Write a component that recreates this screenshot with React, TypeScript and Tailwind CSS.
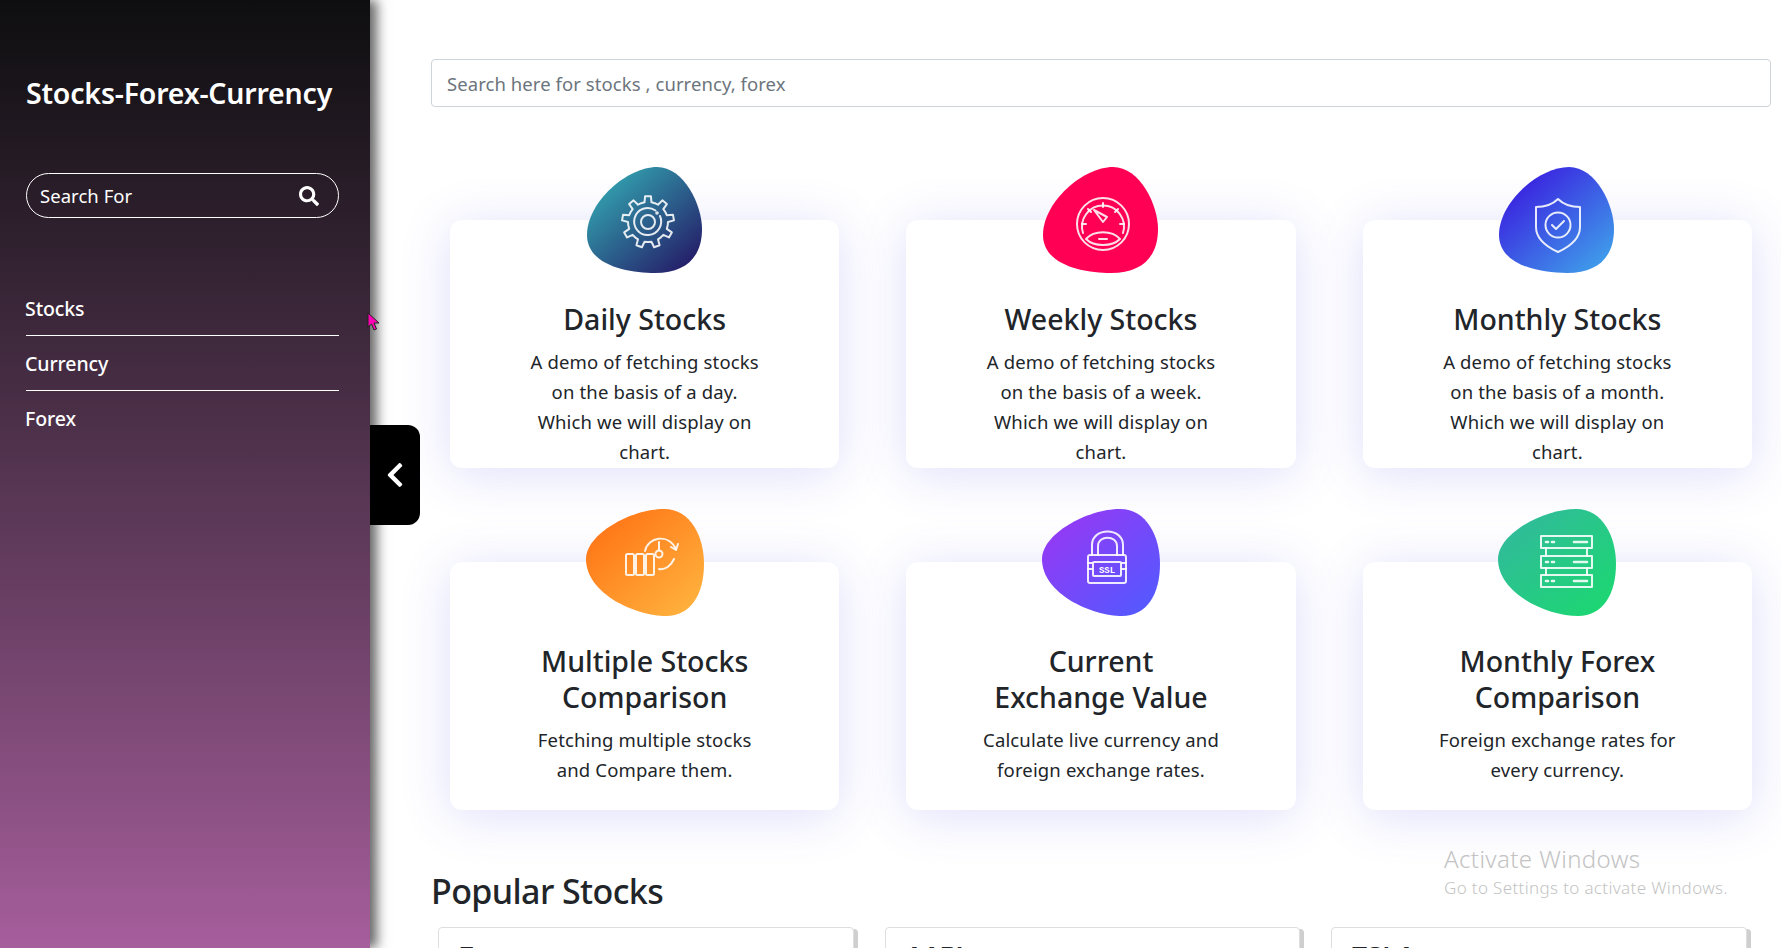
import React from "react";
import { FaSearch, FaChevronLeft } from "react-icons/fa";

const blobA = "M71 0C98 0 116 38 116 62C116 90 100 106 69 106C41 106 1 98 1 68C1 35 41 0 71 0Z";
const blobB = "M78 0C105 0 118 28 118 55C118 85 105 107 80 107C50 107 0 85 0 50C0 25 45 0 78 0Z";

function gearPath(cx: number, cy: number, ro: number, ri: number, teeth: number) {
  const pts: string[] = [];
  const step = (Math.PI * 2) / teeth;
  for (let i = 0; i < teeth; i++) {
    const a = i * step - Math.PI / 2;
    const o = [a - step * 0.25, a - step * 0.16, a + step * 0.16, a + step * 0.25, a + step * 0.5];
    const r = [ri, ro, ro, ri, ri];
    o.forEach((t, j) => pts.push(`${(cx + r[j] * Math.cos(t)).toFixed(2)} ${(cy + r[j] * Math.sin(t)).toFixed(2)}`));
  }
  return "M" + pts.join("L") + "Z";
}

const stroke = { fill: "none", stroke: "white", strokeWidth: 2, strokeLinecap: "round", strokeLinejoin: "round", strokeOpacity: 0.88 } as const;

const GearIcon = () => (
  <g {...stroke}>
    <path d={gearPath(62, 55, 26, 20, 9)} />
    <path d="M69.5 43.5A13.5 13.5 0 1 0 74 49" />
    <circle cx="62" cy="55" r="7" />
    <circle cx="71" cy="46" r="0.8" />
  </g>
);
const GaugeIcon = () => (
  <g {...stroke}>
    <circle cx="61" cy="57" r="26" />
    <path d="M41 66A21 21 0 1 1 81 66" />
    <path d="M44 72C52 63 70 63 78 72C70 80 52 80 44 72Z" />
    <path d="M57 72H65" />
    <path d="M52 43L65 50L61 55Z" />
    <path d="M61 36V40M46 42L49 45M76 42L73 45M40 57H44M82 57H78" />
  </g>
);
const ShieldIcon = () => (
  <g {...stroke}>
    <path d="M60 32C65 37 72 40 82 40V60C82 72 71 80 60 85C49 80 38 72 38 60V40C48 40 55 37 60 32Z" />
    <circle cx="60" cy="58" r="12.5" />
    <path d="M54 58L58 62L66 54" />
  </g>
);
const MultiIcon = () => (
  <g {...stroke}>
    <rect x="40" y="45" width="8" height="21" rx="1.5" />
    <rect x="50" y="45" width="8" height="21" rx="1.5" />
    <rect x="60" y="45" width="8" height="21" rx="1.5" />
    <circle cx="73" cy="45" r="3.5" />
    <path d="M73 41.500V33M59 42C62 28 82 24 90 40" />
    <path d="M85 38L90 41L92 35" />
    <path d="M88 50C85 57 79 61 73 60" />
  </g>
);
const LockIcon = () => (
  <g {...stroke}>
    <path d="M50 46V36C50 18 81 18 81 36V46" />
    <path d="M56 46V37C56 26 75 26 75 37V46" />
    <rect x="46" y="46" width="38" height="28" rx="2" />
    <rect x="51" y="53" width="28" height="14" rx="1" />
    <path d="M46 54H50M46 60H50M80 54H84M80 60H84" />
    <text x="65" y="63.500" textAnchor="middle" fontSize="9" fill="white" stroke="none" fontFamily="'Liberation Mono', monospace" fontWeight="700">SSL</text>
  </g>
);
const ServerIcon = () => (
  <g {...stroke}>
    <rect x="43" y="27" width="51" height="12" />
    <rect x="43" y="47" width="51" height="12" />
    <rect x="43" y="66" width="51" height="12" />
    <path d="M48 39V47M89 39V47M48 59V66M89 59V66" />
    <path d="M48 33H50M54 33H56M76 33H89M48 53H50M54 53H56M76 53H89M48 72H50M54 72H56M76 72H89" strokeWidth={2.6} />
  </g>
);

const services = [
  { title: ["Daily Stocks"], lines: ["A demo of fetching stocks", "on the basis of a day.", "Which we will display on", "chart."], blob: blobA, from: "#3199aa", to: "#25206a", icon: <GearIcon /> },
  { title: ["Weekly Stocks"], lines: ["A demo of fetching stocks", "on the basis of a week.", "Which we will display on", "chart."], blob: blobA, from: "#ff0054", to: "#ff0054", icon: <GaugeIcon /> },
  { title: ["Monthly Stocks"], lines: ["A demo of fetching stocks", "on the basis of a month.", "Which we will display on", "chart."], blob: blobA, from: "#3a27e0", to: "#3f9bea", icon: <ShieldIcon /> },
  { title: ["Multiple Stocks", "Comparison"], lines: ["Fetching multiple stocks", "and Compare them."], blob: blobB, from: "#ff7a1a", to: "#ffb03c", icon: <MultiIcon /> },
  { title: ["Current", "Exchange Value"], lines: ["Calculate live currency and", "foreign exchange rates."], blob: blobB, from: "#8f3cf5", to: "#5658ff", icon: <LockIcon /> },
  { title: ["Monthly Forex", "Comparison"], lines: ["Foreign exchange rates for", "every currency."], blob: blobB, from: "#2fbd97", to: "#1dd673", icon: <ServerIcon /> },
];

function ServiceCard({ s, i }: { s: (typeof services)[number]; i: number }) {
  return (
    <div className="h-[248px] bg-white rounded-xl shadow-[0_6px_50px_rgba(90,90,235,0.2)] text-center">
      <svg width="118" height="107" viewBox="0 0 118 107" className="mx-auto -mt-[53px]">
        <defs>
          <linearGradient id={`g${i}`} x1="0.12" y1="0.1" x2="0.9" y2="0.9">
            <stop offset="0.1" stopColor={s.from} />
            <stop offset="1" stopColor={s.to} />
          </linearGradient>
        </defs>
        <path d={s.blob} fill={`url(#g${i})`} />
        {s.icon}
      </svg>
      <h3 className="mt-[27px] text-[28.500px] leading-9 font-medium text-[#212529]">
        {s.title.map((t) => (
          <span key={t} className="block">{t}</span>
        ))}
      </h3>
      <p className="mt-[10px] text-[18.500px] leading-[30px] text-[#212529] tracking-[0.15px]">
        {s.lines.map((t) => (
          <span key={t} className="block">{t}</span>
        ))}
      </p>
    </div>
  );
}

const stockNames = ["Forex", "AAPL", "TSLA"];

export default function App() {
  return (
    <div className="relative flex h-screen w-full overflow-hidden bg-white font-['Noto_Sans','Open_Sans',sans-serif]">
      <aside className="relative z-10 flex w-[370px] shrink-0 flex-col bg-gradient-to-b from-[#0e0e10] to-[#a65e9c] pl-[26px] pr-[31px] pt-[71px] text-white shadow-[7px_0_11px_rgba(40,40,40,0.7)]">
        <h1 className="text-[28.500px] leading-[44px] font-semibold tracking-[-0.2px] whitespace-nowrap">Stocks-Forex-Currency</h1>
        <div className="mt-[58px] flex h-[45px] items-center justify-between rounded-full border border-white pl-[13px] pr-[19px]">
          <span className="text-[18.500px] tracking-[0.05px]">Search For</span>
          <FaSearch size={20} />
        </div>
        <nav className="mt-[63px] text-[19.500px] font-medium tracking-[-0.1px]">
          <a className="block h-[55px] border-b border-white leading-[55px]"><span className="-ml-px">Stocks</span></a>
          <a className="block h-[55px] border-b border-white leading-[55px]"><span className="-ml-px">Currency</span></a>
          <a className="block h-[55px] leading-[55px]"><span className="-ml-px">Forex</span></a>
        </nav>
        <button className="absolute left-full top-[425px] flex h-[100px] w-[50px] items-center justify-center rounded-r-xl bg-black text-white">
          <FaChevronLeft size={28} />
        </button>
      </aside>

      <main className="flex-1 min-w-0 pl-[61px] pr-[10px] pt-[59px]">
        <input
          readOnly
          placeholder="Search here for stocks , currency, forex"
          className="h-[48px] w-full rounded border border-[#ced4da] px-[15px] text-[18.500px] tracking-[0.07px] placeholder:text-[#6c757d]"
        />
        <div className="mt-[113px] grid grid-cols-3 gap-x-[67px] gap-y-[94px] px-[19px]">
          {services.map((s, i) => (
            <ServiceCard key={i} s={s} i={i} />
          ))}
        </div>
        <h2 className="mt-[59px] text-[34px] leading-[44px] font-medium text-[#212529] tracking-[-0.6px]">Popular Stocks</h2>
        <div className="mt-[14px] grid grid-cols-3 gap-x-[31px] pl-[7px] pr-[24px]">
          {stockNames.map((n) => (
            <div key={n} className="h-[120px] rounded border border-[#dedede] bg-white px-[20px] pt-[12px] shadow-[4px_2px_0_#cfcfcf]">
              <div className="text-2xl font-semibold text-[#212529] leading-8 font-['Liberation_Sans',sans-serif]">{n}</div>
            </div>
          ))}
        </div>
      </main>

      <div className="absolute left-[1444px] top-[843px] text-[#c3c3c3]">
        <div className="text-[24px] leading-8 font-light tracking-[0.4px]">Activate Windows</div>
        <div className="text-[17px] leading-6 font-light tracking-[0.35px] mt-px">Go to Settings to activate Windows.</div>
      </div>

      <svg className="absolute left-[367px] top-[312px] z-20" width="13" height="19" viewBox="0 0 13 19">
        <path d="M1 1V15L4.500 12L7 18L9.500 17L7 11H12Z" fill="#ff00b4" stroke="#222" strokeWidth="1" />
      </svg>
    </div>
  );
}
